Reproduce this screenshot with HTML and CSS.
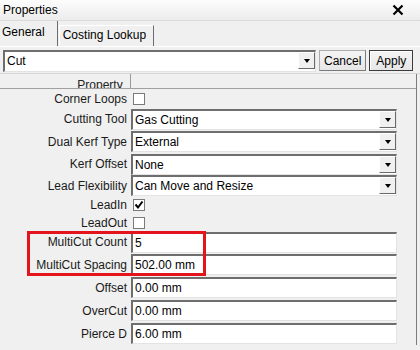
FILE: index.html
```html
<!DOCTYPE html>
<html lang="en">
<head>
    <meta charset="UTF-8">
    <title>Properties</title>
    <link rel="stylesheet" href="styles.css">
</head>
<body>
    <div class="titlebar">
        <span>Properties</span>
        <svg class="close" width="12" height="12" viewBox="0 0 12 12">
            <path d="M1.5 1.5 L10.5 10.5 M10.5 1.5 L1.5 10.5" stroke="#000" stroke-width="2.2"/>
        </svg>
    </div>

    <div class="tabs">
        <div class="tab active">General</div>
        <div class="tab">Costing Lookup</div>
    </div>

    <div class="panel">
        <div class="toolbar">
            <div class="combo">
                <span>Cut</span>
                <div class="drop"><i></i></div>
            </div>
            <button class="btn">Cancel</button>
            <button class="btn default">Apply</button>
        </div>

        <div class="grid">
            <div class="head-label">Property</div>
            <div class="head-value"></div>

            <div class="label">Corner Loops</div>
            <div class="value"><span class="check"></span></div>

            <div class="label">Cutting Tool</div>
            <div class="value"><div class="field">Gas Cutting<div class="drop"><i></i></div></div></div>

            <div class="label">Dual Kerf Type</div>
            <div class="value"><div class="field">External<div class="drop"><i></i></div></div></div>

            <div class="label">Kerf Offset</div>
            <div class="value"><div class="field">None<div class="drop"><i></i></div></div></div>

            <div class="label">Lead Flexibility</div>
            <div class="value"><div class="field">Can Move and Resize<div class="drop"><i></i></div></div></div>

            <div class="label">LeadIn</div>
            <div class="value"><span class="check">
                <svg width="10" height="10" viewBox="0 0 10 10"><path d="M1.5 4.5 L4 7.5 L8.5 1.5" stroke="#000" stroke-width="2" fill="none"/></svg>
            </span></div>

            <div class="label">LeadOut</div>
            <div class="value"><span class="check"></span></div>

            <div class="label">MultiCut Count</div>
            <div class="value"><div class="field">5</div></div>

            <div class="label">MultiCut Spacing</div>
            <div class="value"><div class="field">502.00 mm</div></div>

            <div class="label">Offset</div>
            <div class="value"><div class="field">0.00 mm</div></div>

            <div class="label">OverCut</div>
            <div class="value"><div class="field">0.00 mm</div></div>

            <div class="label">Pierce D</div>
            <div class="value"><div class="field">6.00 mm</div></div>

            <div class="highlight"></div>
        </div>
    </div>
</body>
</html>
```

FILE: styles.css
```css
body {
    margin: 0;
    width: 420px;
    height: 350px;
    overflow: hidden;
    background-color: #f0f0f0;
    font-family: "Liberation Sans", Arial, sans-serif;
    font-size: 12px;
    color: #000;
}
.titlebar {
    height: 20px;
    display: flex;
    align-items: center;
    justify-content: space-between;
    padding: 0 16px 0 3px;
    background: linear-gradient(#fdfdfd, #ececec);
    border-bottom: 1px solid #dadada;
}
.close {
    display: block;
}
.tabs {
    height: 25px;
    display: flex;
    align-items: flex-end;
}
.tab {
    height: 21px;
    line-height: 19px;
    padding: 0 7px 0 3px;
    background-color: #f0f0f0;
    border-top: 1px solid #fff;
    border-left: 1px solid #fff;
    border-right: 1px solid #6d6d6d;
    box-sizing: border-box;
}
.tab.active {
    height: 25px;
    line-height: 22px;
    padding: 0 12px 0 2px;
    border-top: none;
    border-left: none;
    margin-right: 1px;
}
.panel {
    border-top: 1px solid #fff;
}
.toolbar {
    display: flex;
    align-items: center;
    height: 25px;
    padding: 1px 0 0 3px;
    border-bottom: 1px solid #d6d6d6;
}
.combo {
    position: relative;
    width: 313px;
    height: 22px;
    box-sizing: border-box;
    background-color: #fff;
    border-top: 2px solid #6e6e6e;
    border-left: 2px solid #6e6e6e;
    border-right: 1px solid #e3e3e3;
    border-bottom: 1px solid #e3e3e3;
    padding-left: 2px;
    line-height: 19px;
}
.btn {
    height: 21px;
    margin-left: 3px;
    padding: 0 4px;
    font-family: inherit;
    font-size: 12px;
    background: linear-gradient(#f4f4f4, #e6e6e6);
    border: 1px solid #acacac;
    border-right-color: #7a7a7a;
    border-bottom-color: #7a7a7a;
}
.btn.default {
    border: 1px solid #3c3c3c;
    box-shadow: inset 1px 1px 0 #fff;
    width: 44px;
}
.drop {
    position: absolute;
    top: 0;
    right: 0;
    width: 17px;
    height: 17px;
    box-sizing: border-box;
    background-color: #f0f0f0;
    border-top: 1px solid #fff;
    border-left: 1px solid #fff;
    border-right: 1px solid #696969;
    border-bottom: 1px solid #696969;
    display: flex;
    align-items: center;
    justify-content: center;
}
.drop i {
    width: 0;
    height: 0;
    border-left: 3.5px solid transparent;
    border-right: 3.5px solid transparent;
    border-top: 4px solid #000;
    margin-top: 1px;
}
.grid {
    position: relative;
    display: grid;
    width: 416px;
    grid-template-columns: 131px 266px;
    grid-template-rows: 15px 19px 22px 23px 22px 21px 18px 17px 22px 23px 23px 23px 23px;
    border-right: 1px solid #7d7d7d;
}
.head-label {
    border-right: 1px solid #9a9a9a;
    border-bottom: 1px solid #a0a0a0;
    text-align: center;
    line-height: 22px;
    height: 15px;
    box-sizing: border-box;
    overflow: hidden;
    padding-left: 70px;
    color: #222;
}
.head-value {
    border-bottom: 1px solid #a0a0a0;
    margin-right: -19px;
}
.label {
    text-align: right;
    padding-right: 4px;
    display: flex;
    align-items: center;
    justify-content: flex-end;
    white-space: nowrap;
    color: #1a1a1a;
}
.value {
    display: flex;
    align-items: center;
}
.field {
    position: relative;
    width: 100%;
    height: 21px;
    box-sizing: border-box;
    background-color: #fff;
    border-top: 2px solid #6e6e6e;
    border-left: 2px solid #6e6e6e;
    border-right: 1px solid #e3e3e3;
    border-bottom: 1px solid #e3e3e3;
    padding-left: 2px;
    line-height: 18px;
}
.check {
    width: 12px;
    height: 12px;
    margin-left: 2px;
    box-sizing: border-box;
    background-color: #fff;
    border: 1px solid #7a7a7a;
    display: flex;
    align-items: center;
    justify-content: center;
}
.highlight {
    position: absolute;
    left: 27px;
    top: 157px;
    width: 179px;
    height: 45px;
    box-sizing: border-box;
    border: 3px solid #e3141b;
}
```
